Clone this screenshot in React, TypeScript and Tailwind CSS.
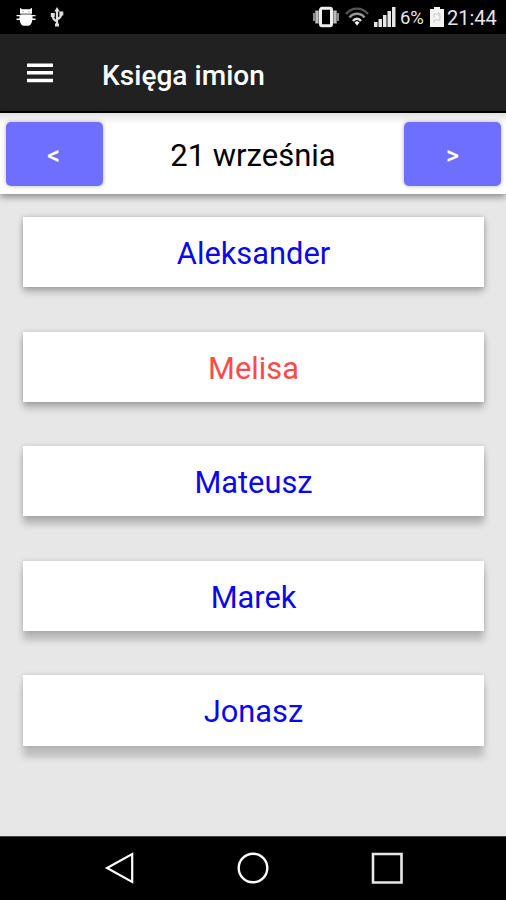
import React from 'react';

const names = [
  { name: 'Aleksander', cls: 'text-[#0808ea] shadow-[0_5px_7px_rgba(0,0,0,0.24),0_0_5px_rgba(0,0,0,0.2)]' },
  { name: 'Melisa', cls: 'text-[#ff4a4a] shadow-[0_6px_7px_rgba(0,0,0,0.24),0_0_5px_rgba(0,0,0,0.18)]' },
  { name: 'Mateusz', cls: 'text-[#0808ea] shadow-[0_8px_7px_rgba(0,0,0,0.22),0_0_5px_rgba(0,0,0,0.16)]' },
  { name: 'Marek', cls: 'text-[#0808ea] shadow-[0_9px_7px_rgba(0,0,0,0.2),0_0_5px_rgba(0,0,0,0.16)]' },
  { name: 'Jonasz', cls: 'text-[#0808ea] shadow-[0_11px_7px_rgba(0,0,0,0.18),0_0_5px_rgba(0,0,0,0.14)]' },
];

function StatusBar() {
  return (
    <div className="flex h-[34px] shrink-0 items-center bg-black pl-4 pr-[9px] text-[#e6e6e6]">
      <svg width="20" height="20" viewBox="0 0 20 20" fill="#fff">
        <path d="M4 0.800 6.200 2.300h7.600L16 .8v6H4z" />
        <path d="M4.500 6.800h11v1.200h-11z" fill="#999" />
        <path d="M0.500 8h19v1.300h-3v2.200h3V13h-3.300c-.2 3.500-2 5.800-4.700 5.800h-3C5.800 18.800 4 16.500 3.800 13H.5v-1.500h3V9.300h-3z" />
        <path d="M6.500 4h1.200v1.200H6.500zM12.300 4h1.200v1.200h-1.200z" fill="#aaa" />
      </svg>
      <svg className="ml-[14px]" width="14" height="20" viewBox="0 0 14 20" fill="none" stroke="#ddd" strokeWidth="2.200">
        <path d="M7 3v14M7 14.500C3.500 12.500 2.800 11.500 2.800 8M7 12.500c3.500-1.500 4.200-3 4.200-6" />
        <path d="M4.300 4.500 7 0l2.700 4.500zM5 16.500h4v3H5zM.8 6h4v4H.8zM9.300 4.500h4v4h-4z" fill="#ddd" stroke="none" />
      </svg>
      <svg className="ml-auto" width="26" height="22" viewBox="0 0 26 22">
        <path d="M1 7v8M25 7v8" stroke="#999" strokeWidth="1.800" />
        <path d="M4 4.500v13M22 4.500v13" stroke="#bbb" strokeWidth="3.400" />
        <rect x="7.500" y="2.300" width="11" height="17.400" rx="1.500" fill="#000" stroke="#eee" strokeWidth="3" />
      </svg>
      <svg className="ml-[6px]" width="24" height="20" viewBox="0 0 24 20" fill="none" strokeWidth="2.400">
        <path d="M1 7C7-.2 17-.2 23 7" stroke="#555" />
        <path d="M4.500 10.500c4-5 11-5 15 0" stroke="#999" />
        <path d="M8 14c2-3 6-3 8 0" stroke="#ddd" />
        <path d="m9.500 15.500 2.500-1.500 2.500 1.500L12 18.500z" fill="#fff" />
      </svg>
      <svg className="ml-[5px]" width="22" height="20" viewBox="0 0 22 20" fill="#e6e6e6">
        <path d="M0 15h3.500v5H0zM4.500 12H8v8H4.500zM9 8h3.500v12H9zM13.500 4H17v16h-3.500zM18 0h3.500v20H18z" />
      </svg>
      <span className="ml-[4px] w-[25px] whitespace-nowrap pt-px text-[18.500px] leading-5 tracking-[-0.200px]">6%</span>
      <svg className="ml-[5px]" width="14" height="20" viewBox="0 0 14 20">
        <path d="M4 0h6v2h4v18H0V2h4z" fill="#f4f4f4" />
        <path d="M4 11V7h6v3M10 9v4H4v3M8 5l2 2-2 2" fill="none" stroke="#c8c8c8" />
      </svg>
      <span className="ml-[3px] w-[50px] whitespace-nowrap pt-px text-[20px] leading-6">21:44</span>
    </div>
  );
}

export default function App() {
  return (
    <div className="flex h-[900px] w-[506px] flex-col overflow-hidden bg-[#e7e7e7] font-['Roboto',sans-serif]">
      <StatusBar />
      <header className="flex h-[79px] shrink-0 items-center border-b-2 border-black bg-[#212121] pl-[27px] pt-px">
        <svg width="26" height="20" viewBox="0 0 26 20" fill="#fff">
          <path d="M0 .5h26V4H0zM0 8h26v3.500H0zM0 15.700h26v3.500H0z" />
        </svg>
        <h1 className="ml-[49px] pt-[5px] text-[28px] font-medium leading-8 tracking-[0.050px] text-white">Księga imion</h1>
      </header>
      <div className="relative flex h-[81px] shrink-0 items-center justify-between bg-white bg-[linear-gradient(#e0e0e0,#fff_11px)] pl-[6px] pr-[5px] shadow-[0_3px_7px_rgba(0,0,0,0.4)]">
        <button className="h-16 w-[97px] rounded-[5px] bg-[#6f6fff] pr-[2px] pt-[5px] text-[25px] font-medium text-white shadow-[0_0_4px_rgba(0,0,0,0.3)]">&lt;</button>
        <span className="pr-px pt-[4px] text-[31px] leading-9 text-black">21 września</span>
        <button className="h-16 w-[97px] rounded-[5px] bg-[#6f6fff] pt-[5px] text-[25px] font-medium text-white shadow-[0_0_4px_rgba(0,0,0,0.3)]">&gt;</button>
      </div>
      <main className="flex flex-1 flex-col gap-[44.300px] pl-[23px] pr-[22px] pt-[23px]">
        {names.map((n) => (
          <div key={n.name} className={`flex h-[70.300px] shrink-0 items-center justify-center bg-white pt-[4px] text-[30.800px] ${n.cls}`}>
            {n.name}
          </div>
        ))}
      </main>
      <nav className="flex h-16 shrink-0 items-center justify-between border-t border-[#444] bg-black pb-[2px] pl-[104px] pr-[103px]">
        <svg width="30" height="32" viewBox="0 0 30 32" fill="none" stroke="#fff" strokeWidth="2.200">
          <path d="M28.200 2v28L3 16z" />
        </svg>
        <svg width="32" height="32" viewBox="0 0 32 32" fill="none" stroke="#fff" strokeWidth="2.400">
          <circle cx="16" cy="16" r="14.300" />
        </svg>
        <svg width="32" height="32" viewBox="0 0 32 32" fill="none" stroke="#e6e6e6" strokeWidth="2.600">
          <path d="M2 2h28.500v28.500H2z" />
        </svg>
      </nav>
    </div>
  );
}
